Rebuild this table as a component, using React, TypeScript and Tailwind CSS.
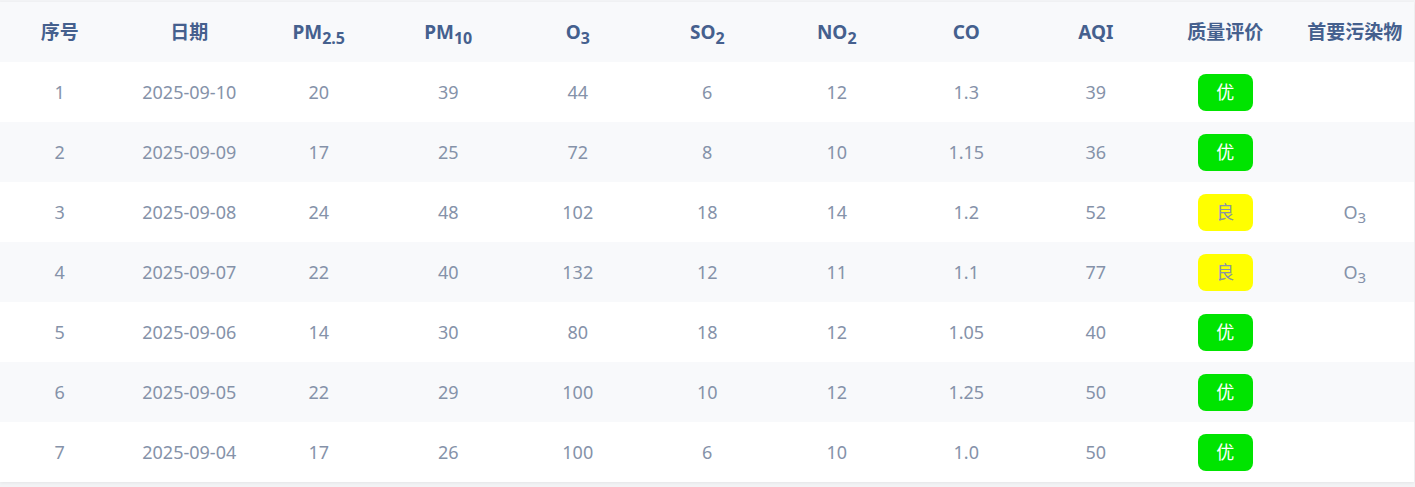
import React from "react"

type Row = {
  date: string
  pm25: number
  pm10: number
  o3: number
  so2: number
  no2: number
  co: string
  aqi: number
  level: "优" | "良"
  primary?: boolean
}

const rows: Row[] = [
  { date: "2025-09-10", pm25: 20, pm10: 39, o3: 44, so2: 6, no2: 12, co: "1.3", aqi: 39, level: "优" },
  { date: "2025-09-09", pm25: 17, pm10: 25, o3: 72, so2: 8, no2: 10, co: "1.15", aqi: 36, level: "优" },
  { date: "2025-09-08", pm25: 24, pm10: 48, o3: 102, so2: 18, no2: 14, co: "1.2", aqi: 52, level: "良", primary: true },
  { date: "2025-09-07", pm25: 22, pm10: 40, o3: 132, so2: 12, no2: 11, co: "1.1", aqi: 77, level: "良", primary: true },
  { date: "2025-09-06", pm25: 14, pm10: 30, o3: 80, so2: 18, no2: 12, co: "1.05", aqi: 40, level: "优" },
  { date: "2025-09-05", pm25: 22, pm10: 29, o3: 100, so2: 10, no2: 12, co: "1.25", aqi: 50, level: "优" },
  { date: "2025-09-04", pm25: 17, pm10: 26, o3: 100, so2: 6, no2: 10, co: "1.0", aqi: 50, level: "优" },
]

const font = { fontFamily: '"Noto Sans", "Noto Sans CJK SC", sans-serif' }

function Chem({ base, sub }: { base: string; sub: string }) {
  return (
    <span>
      {base}
      <sub className="text-[16px] relative top-[5px]">{sub}</sub>
    </span>
  )
}

const headers: React.ReactNode[] = [
  "序号",
  "日期",
  <Chem base="PM" sub="2.5" />,
  <Chem base="PM" sub="10" />,
  <Chem base="O" sub="3" />,
  <Chem base="SO" sub="2" />,
  <Chem base="NO" sub="2" />,
  "CO",
  "AQI",
  "质量评价",
  "首要污染物",
]

function Cell({ children }: { children?: React.ReactNode }) {
  return <div className="flex items-center justify-center pr-[10px] whitespace-nowrap">{children}</div>
}

function Badge({ level }: { level: "优" | "良" }) {
  const good = level === "优"
  return (
    <span
      className={
        good
          ? "w-[55px] h-[37px] rounded-[8px] bg-[#00e400] text-white flex items-center justify-center text-[18px]"
          : "w-[55px] h-[37px] rounded-[8px] bg-[#ffff00] text-[#8a93a6] flex items-center justify-center text-[18px]"
      }
    >
      {level}
    </span>
  )
}

export default function App() {
  return (
    <div className="w-[1415px] h-[487px] bg-[#f2f3f5] pt-[2px]" style={font}>
      <div className="w-[1414px] overflow-hidden bg-white shadow-[0_1px_3px_rgba(0,0,0,0.06)]">
        <div className="grid grid-cols-[repeat(11,129.5px)] h-[60px] bg-[#f8f9fb] text-[19px] font-bold text-[#45608e]">
          {headers.map((h, i) => (
            <Cell key={i}>{h}</Cell>
          ))}
        </div>
        {rows.map((r, i) => (
          <div
            key={i}
            className={
              i % 2 === 0
                ? "grid grid-cols-[repeat(11,129.5px)] h-[60px] bg-white text-[18px] text-[#8592a9]"
                : "grid grid-cols-[repeat(11,129.5px)] h-[60px] bg-[#f8f9fb] text-[18px] text-[#8592a9]"
            }
          >
            <Cell>{i + 1}</Cell>
            <Cell>{r.date}</Cell>
            <Cell>{r.pm25}</Cell>
            <Cell>{r.pm10}</Cell>
            <Cell>{r.o3}</Cell>
            <Cell>{r.so2}</Cell>
            <Cell>{r.no2}</Cell>
            <Cell>{r.co}</Cell>
            <Cell>{r.aqi}</Cell>
            <Cell>
              <Badge level={r.level} />
            </Cell>
            <Cell>
              {r.primary ? (
                <span className="text-[18px]">
                  O<sub className="text-[15px] relative top-[4px]">3</sub>
                </span>
              ) : null}
            </Cell>
          </div>
        ))}
      </div>
    </div>
  )
}
